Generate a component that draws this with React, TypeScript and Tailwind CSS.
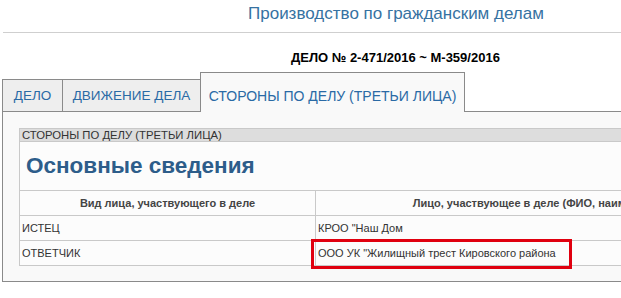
import React from "react";

const tabs = [
  { name: "ДЕЛО", w: "w-[60px]", active: false },
  { name: "ДВИЖЕНИЕ ДЕЛА", w: "w-[138px]", active: false },
  { name: "СТОРОНЫ ПО ДЕЛУ (ТРЕТЬИ ЛИЦА)", w: "w-[265px]", active: true },
];

const rows = [
  { kind: "ИСТЕЦ", who: "КРОО \"Наш Дом" },
  { kind: "ОТВЕТЧИК", who: "ООО УК \"Жилищный трест Кировского района" },
];

export default function App() {
  return (
    <div className="relative w-[621px] h-[298px] overflow-hidden bg-white font-['Liberation_Sans',Arial,sans-serif]">
      {/* page title */}
      <div className="h-[32px] pl-[248px] pt-[4px] text-[17px] leading-[20px] text-[#3672a2]">
        Производство по гражданским делам
      </div>
      <div className="ml-[3px] h-px bg-[#cfcfcf]" />

      {/* case number */}
      <div className="h-[39px] pl-[291px] pt-[17px] text-[13px] leading-[15px] font-bold text-black">
        ДЕЛО № 2-471/2016 ~ М-359/2016
      </div>

      {/* tabs */}
      <div className="relative z-10 -mb-px flex h-[40px] items-end pl-[2px]">
        {tabs.map((t) =>
          t.active ? (
            <div
              key={t.name}
              className={`${t.w} flex h-[40px] items-end justify-center border border-b-0 border-[#8a8a8a] bg-[#f9f9f9] pb-[8px] text-[14px] leading-[15px] text-[#2a6aa5]`}
            >
              {t.name}
            </div>
          ) : (
            <div
              key={t.name}
              className={`${t.w} flex h-[33px] items-end justify-center border border-r-0 border-[#8a8a8a] bg-[#eeeeee] pb-[8px] text-[13.5px] leading-[15px] text-[#2a6aa5]`}
            >
              {t.name}
            </div>
          )
        )}
      </div>

      {/* tab panel */}
      <div className="ml-[2px] h-[171px] w-[820px] border border-[#8a8a8a] bg-[#f9f9f9] pl-[16px] pt-[16px]">
        <div className="w-[760px] border border-[#c9c9c9] bg-[#fcfcfc]">
          <div className="h-[13px] border-b border-[#c9c9c9] bg-[#dddddd] pl-[2px] text-[11.3px] leading-[13px] text-[#333]">
            СТОРОНЫ ПО ДЕЛУ (ТРЕТЬИ ЛИЦА)
          </div>
          <div className="h-[48px] pl-[6px] pt-[10px] text-[22.5px] leading-[28px] font-bold text-[#2d5d8a]">
            Основные сведения
          </div>
          <div className="grid grid-cols-[295px_1fr]">
            <div className="flex h-[25px] items-center justify-center border-t border-[#c9c9c9] text-[11px] font-bold text-[#444]">
              Вид лица, участвующего в деле
            </div>
            <div className="flex h-[25px] items-center justify-center border-t border-l border-[#c9c9c9] text-[11px] font-bold text-[#444]">
              Лицо, участвующее в деле (ФИО, наименование)
            </div>
            {rows.map((r) => (
              <React.Fragment key={r.kind}>
                <div className="flex h-[25px] items-center border-t border-[#c9c9c9] pl-[2px] text-[11px] text-[#333]">
                  {r.kind}
                </div>
                <div className="flex h-[25px] items-center border-t border-l border-[#c9c9c9] pl-[2px] text-[11px] text-[#333]">
                  {r.who}
                </div>
              </React.Fragment>
            ))}
          </div>
        </div>
      </div>

      {/* red highlight annotation */}
      <div className="absolute left-[311px] top-[239px] h-[30px] w-[261px] border-[3px] border-[#e0000f]" />
    </div>
  );
}
